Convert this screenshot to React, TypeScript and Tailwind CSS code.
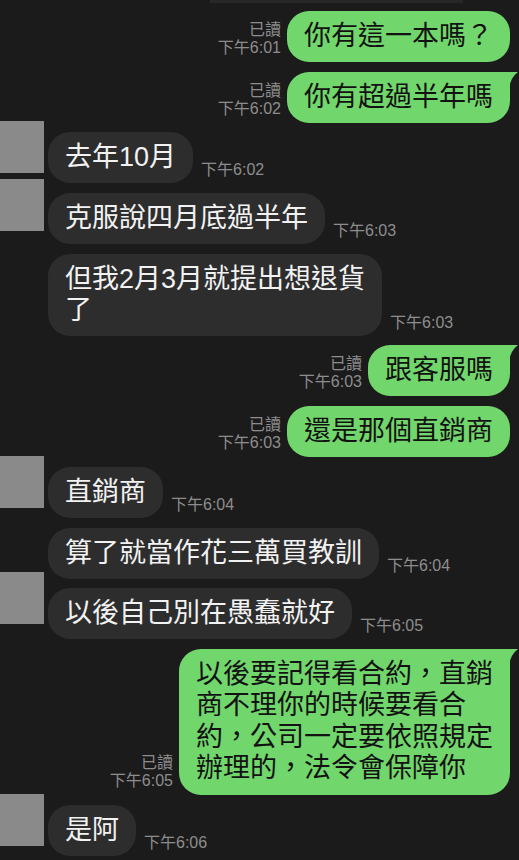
import React from "react";

const FONT = "font-['Liberation_Sans','Noto_Sans_CJK_TC',sans-serif]";

function Tail() {
  return (
    <svg
      className="absolute right-[-8px] top-0"
      width="9"
      height="16"
      viewBox="0 0 9 16"
    >
      <path d="M0 0 H9 Q2 5 0 16 Z" fill="#71d66b" />
    </svg>
  );
}

function Out({
  lines,
  time,
  tail,
  big,
}: {
  lines: string[];
  time: string;
  tail?: boolean;
  big?: boolean;
}) {
  return (
    <div className="flex justify-end items-end pr-[9px]">
      <div className="mr-[6px] mb-[5px] text-right text-[16px] leading-[18px] text-[#8d8d8d]">
        <div>已讀</div>
        <div>{time}</div>
      </div>
      <div
        className={
          "relative bg-[#71d66b] text-[#121212] text-[27px] px-[17px] py-[10px] rounded-[22px] " +
          (big ? "leading-[31.5px] " : "leading-[31px] ") +
          (tail ? "rounded-tr-none" : "")
        }
      >
        {lines.map((l, i) => (
          <div key={i} className="whitespace-nowrap">
            {l}
          </div>
        ))}
        {tail && <Tail />}
      </div>
    </div>
  );
}

function In({
  lines,
  time,
  avatar,
}: {
  lines: string[];
  time: string;
  avatar?: string;
}) {
  return (
    <div className="flex items-start">
      <div className="w-[48px] shrink-0">
        {avatar && <div className={"w-[44px] h-[52px] bg-[#8a8a8a] " + avatar} />}
      </div>
      <div className="flex items-end">
        <div className="bg-[#2d2d2d] text-[#f2f2f2] text-[27px] leading-[31px] px-[17px] py-[10px] rounded-[22px]">
          {lines.map((l, i) => (
            <div key={i} className="whitespace-nowrap">
              {l}
            </div>
          ))}
        </div>
        <div className="ml-[8px] mb-[4px] text-[16px] leading-[18px] text-[#8d8d8d] whitespace-nowrap">
          {time}
        </div>
      </div>
    </div>
  );
}

export default function App() {
  return (
    <div className={"w-[519px] h-[860px] overflow-hidden bg-[#1b1b1b] " + FONT}>
      <div className="ml-[210px] w-[253px] h-[3px] bg-[#282828]" />
      <div className="flex flex-col gap-[9.7px] pt-[8px]">
        <Out lines={["你有這一本嗎？"]} time="下午6:01" />
        <Out lines={["你有超過半年嗎"]} time="下午6:02" tail />
        <In lines={["去年10月"]} time="下午6:02" avatar="-mt-[11px]" />
        <In lines={["克服說四月底過半年"]} time="下午6:03" avatar="-mt-[14px]" />
        <In lines={["但我2月3月就提出想退貨", "了"]} time="下午6:03" />
        <Out lines={["跟客服嗎"]} time="下午6:03" tail />
        <Out lines={["還是那個直銷商"]} time="下午6:03" />
        <In lines={["直銷商"]} time="下午6:04" avatar="-mt-[11px]" />
        <In lines={["算了就當作花三萬買教訓"]} time="下午6:04" />
        <In lines={["以後自己別在愚蠢就好"]} time="下午6:05" avatar="-mt-[16px]" />
        <Out
          lines={[
            "以後要記得看合約，直銷",
            "商不理你的時候要看合",
            "約，公司一定要依照規定",
            "辦理的，法令會保障你",
          ]}
          time="下午6:05"
          tail
          big
        />
        <In lines={["是阿"]} time="下午6:06" avatar="-mt-[11px]" />
      </div>
    </div>
  );
}
